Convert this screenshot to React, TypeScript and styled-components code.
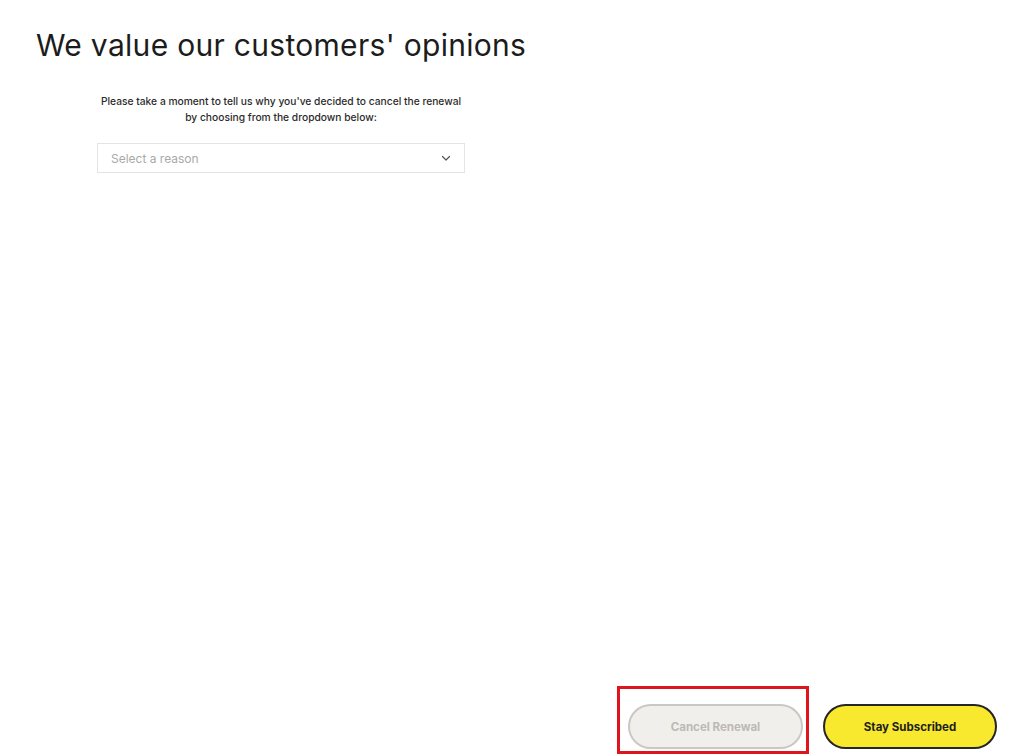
import { FC } from "react"
import styled, { createGlobalStyle } from "styled-components"

const GlobalStyle = createGlobalStyle`
  html, body {
    margin: 0;
    padding: 0;
    background: #fff;
  }
  body {
    font-family: Inter, "Liberation Sans", sans-serif;
    color: #1f1f1f;
  }
`

const Page = styled.div`
  height: 755px;
  display: flex;
  flex-direction: column;
  box-sizing: border-box;
  padding: 25px 27px 1px 36px;
`
const Heading = styled.h1`
  margin: 0;
  font-size: 30px;
  font-weight: 400;
  line-height: 40px;
  color: #1c1c1c;
  letter-spacing: 0.3px;
`
const Content = styled.div`
  width: 368px;
  margin: 28px 0 0 61px;
  display: flex;
  flex-direction: column;
  align-items: stretch;
`
const Intro = styled.p`
  margin: 0;
  text-align: center;
  white-space: nowrap;
  font-size: 10.25px;
  line-height: 16px;
  font-weight: 500;
  color: #2b2b2b;
`
const Select = styled.div`
  margin-top: 18px;
  height: 30px;
  box-sizing: border-box;
  border: 1px solid #e4e4e4;
  display: flex;
  align-items: center;
  justify-content: space-between;
  padding: 0 12px 0 13px;
  font-size: 12px;
  color: #a9a9a9;
  cursor: pointer;
`
const Spacer = styled.div`
  flex: 1;
`
const Footer = styled.div`
  display: flex;
  justify-content: flex-end;
  align-items: flex-end;
  gap: 14px;
`
const Highlight = styled.div`
  border: 3px solid #e0141e;
  padding: 15px 3px 2px 8px;
  display: flex;
`
const Button = styled.button<{ $variant: "muted" | "primary" }>`
  width: ${p => (p.$variant === "primary" ? "174px" : "175px")};
  height: 45px;
  box-sizing: border-box;
  border-radius: 23px;
  font-family: Inter, "Liberation Sans", sans-serif;
  font-size: 11.5px;
  font-weight: 700;
  cursor: pointer;
  border: 2px solid ${p => (p.$variant === "primary" ? "#262626" : "#cbc8c4")};
  background: ${p => (p.$variant === "primary" ? "#f8e82e" : "#f1efeb")};
  color: ${p => (p.$variant === "primary" ? "#1e1e1e" : "#bdb9b5")};
  margin-bottom: ${p => (p.$variant === "primary" ? "5px" : "0")};
`

const Chevron: FC = () => (
  <svg width="12" height="12" viewBox="0 0 24 24" fill="none" stroke="#555" strokeWidth="2.4" strokeLinecap="round" strokeLinejoin="round">
    <path d="M5 9l7 7 7-7" />
  </svg>
)

const App: FC = () => {
  return (
    <Page>
      <GlobalStyle />
      <Heading>We value our customers' opinions</Heading>
      <Content>
        <Intro>
          Please take a moment to tell us why you've decided to cancel the renewal
          <br />
          by choosing from the dropdown below:
        </Intro>
        <Select>
          <span>Select a reason</span>
          <Chevron />
        </Select>
      </Content>
      <Spacer />
      <Footer>
        <Highlight>
          <Button $variant="muted">Cancel Renewal</Button>
        </Highlight>
        <Button $variant="primary">Stay Subscribed</Button>
      </Footer>
    </Page>
  )
}

export default App
